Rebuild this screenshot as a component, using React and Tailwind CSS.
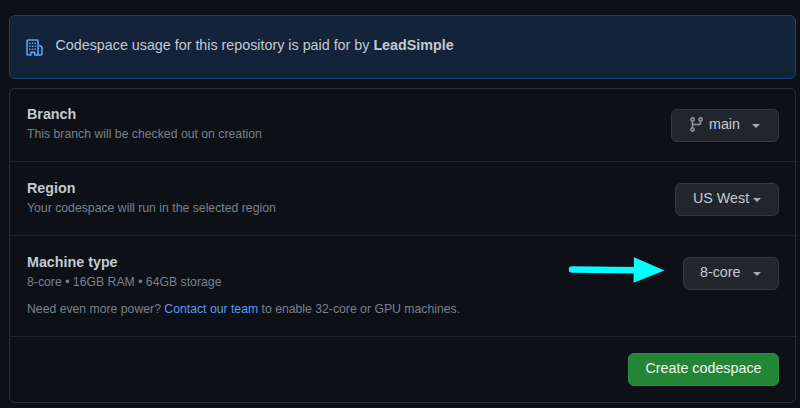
function BuildingIcon() {
  return (
    <svg className="h-[17px] w-[17px] shrink-0 text-[#58a6ff]" viewBox="0 0 24 24" fill="none" stroke="currentColor" strokeWidth="2.2">
      <path d="M3 1.4h12.5a1.5 1.5 0 0 1 1.5 1.5v19.6h-4.6v-3.6H6.9v3.6H3A1.5 1.5 0 0 1 1.5 21V2.9A1.5 1.5 0 0 1 3 1.4ZM17 22.5h4.2a1.3 1.3 0 0 0 1.3-1.3v-9a2 2 0 0 0-.9-1.6l-2-1.3" strokeLinejoin="round" strokeLinecap="round" />
      <path d="M4.4 6h2.1M8.2 6h2.1M12 6h2.1M4.4 10.3h2.1M8.2 10.3h2.1M12 10.3h2.1M4.4 14.6h2.1M8.2 14.6h2.1M12 14.6h2.1" />
    </svg>
  );
}

function BranchIcon() {
  return (
    <svg className="-mt-[3px] mr-[3px] h-[17px] w-[17px] text-[#8b949e]" viewBox="0 0 16 16" fill="none" stroke="currentColor" strokeWidth="1.5">
      <circle cx="4.25" cy="3.25" r="1.5" />
      <circle cx="4.25" cy="12.75" r="1.5" />
      <circle cx="11.75" cy="3.25" r="1.5" />
      <path d="M4.25 4.75v6.5M11.75 4.75v1.5A1.75 1.75 0 0 1 10 8H4.25" />
    </svg>
  );
}

function Caret({ className }) {
  return (
    <svg className={className} width="8" height="4" viewBox="0 0 8 4">
      <path d="M0 0h8L4 4Z" fill="#a6adb5" />
    </svg>
  );
}

function Select({ className, caret, children }) {
  return (
    <button className={`flex h-[33px] shrink-0 items-center rounded-[6px] border border-[#34383f] bg-[#21262d] text-[14.3px] leading-[20px] text-[#c3cad1] ${className}`}>
      {children}
      <Caret className={caret} />
    </button>
  );
}

function Row({ title, detail, className, children }) {
  return (
    <section className={`flex justify-between border-b border-[#20252b] pr-[16px] pl-[17px] ${className}`}>
      <div className="text-[12.25px] leading-[18px] text-[#79818a]">
        <h2 className="text-[14.3px] leading-[20px] font-bold text-[#c3cad1]">{title}</h2>
        <p className="mt-px">{detail}</p>
        {title === "Machine type" && (
          <p className="mt-[9px] tracking-[-0.01px]">
            Need even more power? <a className="text-[#539bf5]">Contact our team</a> to enable 32-core or GPU machines.
          </p>
        )}
      </div>
      {children}
    </section>
  );
}

export default function App() {
  return (
    <main className="relative h-[408px] w-[800px] overflow-hidden bg-[#0d1017] pt-[15px] pr-[4px] pl-[9px] font-['Liberation_Sans',Arial,sans-serif]">
      <div className="flex h-[64px] items-center rounded-[6px] border border-[#1e437a] bg-[#132339] pl-[16px] text-[14.3px] leading-[20px] text-[#c3cad1]">
        <BuildingIcon />
        <p className="-mt-[4px] ml-[12.5px] whitespace-nowrap">
          Codespace usage for this repository is paid for by <strong>LeadSimple</strong>
        </p>
      </div>
      <div className="mt-[9px] h-[315px] rounded-[6px] border border-[#2b3037]">
        <Row title="Branch" detail="This branch will be checked out on creation" className="h-[73px] pt-[15px]">
          <Select className="mt-[5px] w-[108px] pl-[16px]" caret="ml-[12px] mt-px">
            <BranchIcon /><span className="-mt-[3px] ml-px">main</span>
          </Select>
        </Row>
        <Row title="Region" detail="Your codespace will run in the selected region" className="h-[74px] pt-[16px]">
          <Select className="mt-[5px] w-[104px] pl-[17px]" caret="ml-[4px] mt-px">
            <span className="-mt-[3px]">US West</span>
          </Select>
        </Row>
        <Row title="Machine type" detail="8-core • 16GB RAM • 64GB storage" className="h-[101px] pt-[16px]">
          <Select className="mt-[5px] w-[96px] pl-[16px]" caret="ml-[12px] mt-px">
            <span className="-mt-[3px]">8-core</span>
          </Select>
        </Row>
        <div className="flex justify-end pt-[16px] pr-[16px]">
          <button className="h-[33px] w-[151px] rounded-[6px] border border-[#2f8e41] bg-[#238636] pb-[3px] text-[14.3px] leading-[20px] text-[#f0f6f1]">Create codespace</button>
        </div>
      </div>
      <svg className="absolute top-[255px] left-[566px]" width="102" height="30" viewBox="0 0 102 30" fill="#00ffff">
        <path d="M6 14.6L72 15.3" stroke="#00ffff" strokeWidth="6.5" strokeLinecap="round" />
        <path d="M68 2.3L98.5 15.5L67.5 27.8Z" />
      </svg>
    </main>
  );
}
